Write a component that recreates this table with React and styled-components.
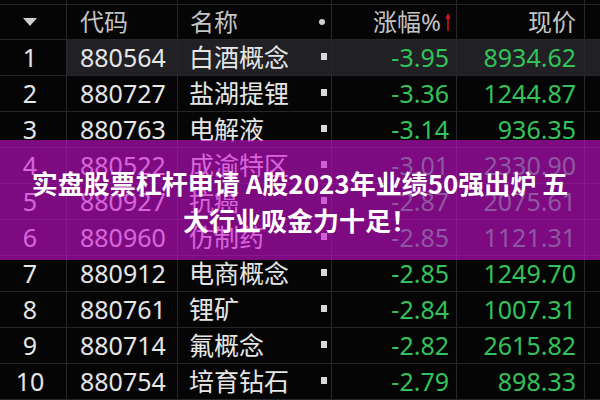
import React from "react";
import styled, { createGlobalStyle } from "styled-components";

const Global = createGlobalStyle`
  html, body { margin: 0; padding: 0; background: #050506; }
  body { width: 600px; height: 400px; overflow: hidden; }
`;

const COLS = "67px 111px 154px 125px 128px 15px";

const Page = styled.div`
  position: relative;
  width: 600px;
  height: 400px;
  overflow: hidden;
  background: #050506;
  font-family: "Noto Sans", "Noto Sans CJK SC", sans-serif;
`;

const Row = styled.div`
  display: grid;
  grid-template-columns: ${COLS};
  height: ${(p) => p.$h}px;
  border-bottom: 1px solid #25252a;
  box-sizing: border-box;
`;

const Cell = styled.div`
  display: flex;
  align-items: center;
  justify-content: ${(p) => p.$align || "flex-start"};
  box-sizing: border-box;
  padding: ${(p) => p.$pad || "0"};
  border-right: ${(p) => (p.$last ? "none" : "1px solid #26262b")};
  background: ${(p) => (p.$sel ? "#202025" : "transparent")};
  color: ${(p) => p.$color || "#e6e6e6"};
  font-size: ${(p) => p.$size || 25}px;
  line-height: 1;
  white-space: nowrap;
  position: relative;
`;

const Square = styled.span`
  position: absolute;
  right: 4px;
  top: 50%;
  width: 6px;
  height: 7px;
  margin-top: -5px;
  background: #d8d8d8;
`;

const Dot = styled.span`
  position: absolute;
  right: 6px;
  top: 50%;
  width: 6px;
  height: 6px;
  margin-top: -3px;
  border-radius: 50%;
  background: #d0d0d0;
`;

const Overlay = styled.div`
  position: absolute;
  left: 0;
  top: 140px;
  width: 600px;
  height: 120px;
  background: rgba(205, 14, 210, 0.6);
  display: flex;
  flex-direction: column;
  align-items: center;
  justify-content: center;
  color: #ffffff;
  font-family: "Noto Sans CJK SC", sans-serif;
  font-weight: 700;
  font-size: 26px;
  line-height: 37px;
  text-align: center;
  padding-top: 2px;
  box-sizing: border-box;
`;

const rows = [
  ["1", "880564", "白酒概念", "-3.95", "8934.62"],
  ["2", "880727", "盐湖提锂", "-3.36", "1244.87"],
  ["3", "880763", "电解液", "-3.14", "936.35"],
  ["4", "880522", "成渝特区", "-3.01", "2330.90"],
  ["5", "880927", "抗癌", "-2.87", "2075.61"],
  ["6", "880960", "仿制药", "-2.85", "1121.31"],
  ["7", "880912", "电商概念", "-2.85", "1249.70"],
  ["8", "880761", "锂矿", "-2.84", "1007.31"],
  ["9", "880714", "氟概念", "-2.82", "2615.82"],
  ["10", "880754", "培育钻石", "-2.79", "898.33"],
];

const GREEN = "#34c25a";

function Arrow() {
  return (
    <svg width="6" height="20" viewBox="0 0 6 20" style={{ marginLeft: 4 }}>
      <path d="M3 1 L0.5 7 L2.3 7 L2.3 19 L3.7 19 L3.7 7 L5.5 7 Z" fill="#e0141e" />
    </svg>
  );
}

function Tri() {
  return (
    <svg width="14" height="8" viewBox="0 0 14 8">
      <path d="M0 0 L14 0 L7 8 Z" fill="#cfcfcf" />
    </svg>
  );
}

export default function App() {
  return (
    <Page>
      <Global />
      <Row $h={5}>
        <Cell /><Cell /><Cell /><Cell /><Cell /><Cell $last />
      </Row>
      <Row $h={35}>
        <Cell $align="center" $pad="0 6px 0 0"><Tri /></Cell>
        <Cell $pad="0 0 0 13px" $color="#c4c4c4" $size={24}>代码</Cell>
        <Cell $pad="0 0 0 12px" $color="#c4c4c4" $size={24}>名称<Dot /></Cell>
        <Cell $align="flex-end" $pad="0 5px 0 0" $color="#c4c4c4" $size={24}>涨幅%<Arrow /></Cell>
        <Cell $align="flex-end" $pad="0 8px 0 0" $color="#c4c4c4" $size={24}>现价</Cell>
        <Cell $last />
      </Row>
      {rows.map((r, i) => {
        const sel = i === 0;
        return (
          <Row $h={36} key={r[0]}>
            <Cell $align="center" $pad="0 6px 0 0">{r[0]}</Cell>
            <Cell $sel={sel} $pad="0 0 0 13px">{r[1]}</Cell>
            <Cell $sel={sel} $pad="0 0 0 11px">{r[2]}<Square /></Cell>
            <Cell $sel={sel} $align="flex-end" $pad="0 7px 0 0" $color={GREEN}>{r[3]}</Cell>
            <Cell $sel={sel} $align="flex-end" $pad="0 8px 0 0" $color={GREEN}>{r[4]}</Cell>
            <Cell $sel={sel} $last />
          </Row>
        );
      })}
      <Overlay>
        <div>实盘股票杠杆申请 A股2023年业绩50强出炉 五</div>
        <div>大行业吸金力十足！</div>
      </Overlay>
    </Page>
  );
}
